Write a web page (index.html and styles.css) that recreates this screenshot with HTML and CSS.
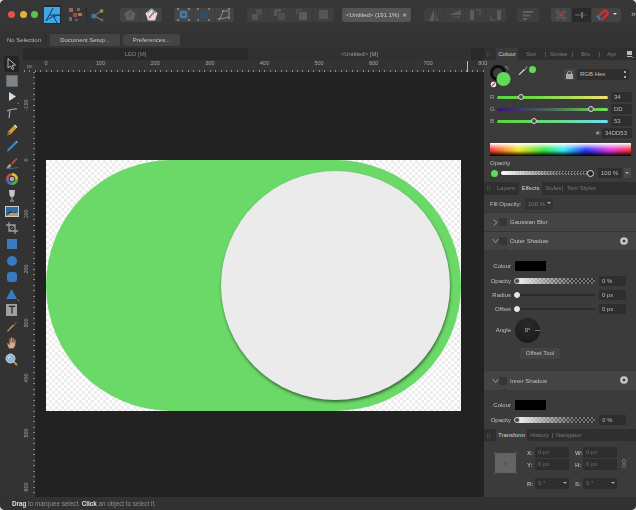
FILE: index.html
```html
<!DOCTYPE html>
<html lang="en">
<head>
<meta charset="utf-8">
<title>Affinity Designer</title>
<link rel="stylesheet" href="styles.css">
</head>
<body>
<div class="window">
  <header class="toolbar">
    <div class="lights"><i class="light red"></i><i class="light yellow"></i><i class="light green"></i></div>
    <div class="persona-active">
      <svg width="16" height="16" viewBox="0 0 16 16"><rect width="16" height="16" fill="#3fa7e6"/><path d="M2 14 9 1M5 8h11M9 8l4 8M2 14c3-3 7-5 14-6" stroke="#123a66" fill="none" stroke-width="1"/></svg>
    </div>
    <svg class="ticon" width="15" height="15" viewBox="0 0 15 15"><rect x="1" y="1" width="4" height="4" fill="#b5744a"/><rect x="9" y="1" width="3" height="3" fill="#777"/><rect x="5" y="6" width="4" height="4" fill="#b5533a"/><rect x="10" y="6" width="4" height="3" fill="#c28b3b"/><rect x="1" y="10" width="3" height="4" fill="#5a7fae"/><rect x="7" y="12" width="3" height="2" fill="#8a5aa0"/></svg>
    <i class="vline"></i>
    <svg class="ticon" width="14" height="14" viewBox="0 0 14 14"><path d="M3 8 10 3M3 8l8 4" stroke="#8aa" fill="none"/><circle cx="3" cy="8" r="2.6" fill="#4d84ad"/><circle cx="10.5" cy="3" r="2" fill="#a8a050"/><circle cx="11" cy="12" r="1.5" fill="#8a5aa0"/></svg>
    <div class="group g-styles">
      <span class="btn"><svg width="12" height="12" viewBox="0 0 12 12"><path d="M6 .5 11.5 4.5 9.5 11h-7L.5 4.5z" fill="#6c6c6c"/><path d="M6 3.5v4" stroke="#444"/></svg></span>
      <span class="btn"><svg class="bright" width="13" height="13" viewBox="0 0 13 13"><path d="M6.5.5 12.5 5 10 12.500H3L.5 5z" fill="#e6e6e6"/><path d="M4 10 9.500 3.500" stroke="#e0502f" stroke-width="1.200"/><path d="M2 5 6.500 1.500 11 5" stroke="#5a93c9" fill="none"/></svg></span>
    </div>
    <div class="group g-snap">
      <span class="btn"><svg width="13" height="13" viewBox="0 0 13 13"><rect x="2" y="2" width="9" height="9" fill="#2f5f8f"/><path d="M4 4h5v5H4z" fill="none" stroke="#7fb2df"/><path d="M0 0h2v2H0zM11 0h2v2h-2zM0 11h2v2H0zM11 11h2v2h-2z" fill="#999"/></svg></span>
      <span class="btn"><svg width="13" height="13" viewBox="0 0 13 13"><rect x="3" y="3" width="7" height="7" fill="#2d5275"/><path d="M0 0h2v2H0zM11 0h2v2h-2zM0 11h2v2H0zM11 11h2v2h-2z" fill="#888"/></svg></span>
      <span class="btn"><svg width="13" height="13" viewBox="0 0 13 13"><path d="M2 11 5 3h6v6z" fill="none" stroke="#aaa"/><path d="M0 10h2v2H0zM10 0h2v2h-2zM10 9h2v2h-2zM4 2h2v2H4z" fill="#999"/></svg></span>
    </div>
    <div class="group g-order">
      <span class="btn"><svg width="11" height="11" viewBox="0 0 11 11"><rect x="0" y="5" width="6" height="6" fill="#5e5e5e"/><rect x="4" y="0" width="6" height="6" fill="#555"/></svg></span>
      <span class="btn"><svg width="11" height="11" viewBox="0 0 11 11"><path d="M0 0h7v3H3v4H0z" fill="#5e5e5e"/><rect x="4" y="4" width="7" height="7" fill="#555"/></svg></span>
      <span class="btn"><svg width="11" height="11" viewBox="0 0 11 11"><rect x="3" y="3" width="8" height="8" fill="#666"/><path d="M0 0h6v2H2v4H0z" fill="#555"/></svg></span>
      <span class="btn"><svg width="11" height="11" viewBox="0 0 11 11"><rect x="1" y="1" width="9" height="9" fill="#5e5e5e"/></svg></span>
    </div>
    <div class="doc-title"><span>&lt;Untitled&gt; (191.1%)</span><span class="star">★</span></div>
    <div class="group g-flip">
      <span class="btn"><svg width="12" height="12" viewBox="0 0 12 12"><path d="M6 0v12H1z" fill="#666"/><path d="M7 2v10h4z" fill="#555"/></svg></span>
      <span class="btn"><svg width="12" height="12" viewBox="0 0 12 12"><path d="M12 1v5H0z" fill="#666"/><path d="M11 7v3L3 7z" fill="#555"/></svg></span>
      <span class="btn"><svg width="12" height="12" viewBox="0 0 12 12"><path d="M1 1h4v10H1z" fill="#666"/><path d="M7 1h4v5" fill="none" stroke="#666"/></svg></span>
      <span class="btn"><svg width="12" height="12" viewBox="0 0 12 12"><path d="M7 1h4v10H7z" fill="#666"/><path d="M5 11H1V6" fill="none" stroke="#666"/></svg></span>
    </div>
    <div class="group g-align">
      <span class="btn"><svg width="12" height="10" viewBox="0 0 12 10"><path d="M1 1h10v2H1zM1 4.500h7v2H1zM1 8h4v2H1z" fill="#6c6c6c"/></svg></span>
    </div>
    <div class="group g-snapping">
      <span class="btn"><svg width="12" height="12" viewBox="0 0 12 12"><path d="M3 0v12M9 0v12M0 3h12M0 9h12" stroke="#777" stroke-width=".7"/><rect x="3" y="3" width="6" height="6" fill="#6b4d4d"/><circle cx="6" cy="6" r="1.500" fill="#e0392b"/></svg></span>
      <span class="btn dark"><svg width="12" height="8" viewBox="0 0 12 8"><path d="M0 4h6" stroke="#888"/><rect x="6" y="1" width="2" height="6" fill="#888"/><path d="M8 4h4" stroke="#666"/></svg></span>
      <span class="btn wide"><svg class="bright" width="13" height="13" viewBox="0 0 13 13"><path d="M2 9 7.500 3.200a2.500 2.500 0 0 1 3.500 3.500L5.500 12" fill="none" stroke="#d92b2b" stroke-width="2.400"/><path d="M1 8l3.500 3.500" stroke="#3f7fd6" stroke-width="1.800"/></svg><i class="caret"></i></span>
    </div>
    <span class="more">»</span>
  </header>

  <div class="context">
    <span class="ctx-label">No Selection</span>
    <i class="vline ctx-line"></i>
    <span class="ctx-btn doc-setup">Document Setup...</span>
    <span class="ctx-btn prefs">Preferences...</span>
  </div>

  <div class="main">
    <div class="workspace">
      <nav class="tools">
        <span class="tool on"><svg width="11" height="12" viewBox="0 0 11 12"><path d="M2 .5v9.500l2.500-2 1.700 3.500 1.600-.8L6.200 7.400 9.500 7z" fill="none" stroke="#ccc"/></svg></span>
        <span class="tool"><svg width="12" height="12" viewBox="0 0 12 12"><rect x=".5" y=".5" width="11" height="11" fill="#8b8b8b" stroke="#5d7f9e" stroke-dasharray="2 1"/></svg></span>
        <span class="tool sub"><svg width="8" height="9" viewBox="0 0 8 9"><path d="M1 0v9l7-4.500z" fill="#eee"/></svg></span>
        <span class="tool"><svg width="12" height="12" viewBox="0 0 12 12"><path d="M1 4c4-2 7-2 10-2M4 4l-1 7" stroke="#ccc" fill="none"/><rect x="2.500" y="2.500" width="2" height="2" fill="#5a93c9"/></svg></span>
        <span class="tool"><svg width="12" height="12" viewBox="0 0 12 12"><path d="M8.500 1 11 3.500 5 10l-4 1.500L2.500 7z" fill="#e8a23a"/><path d="M1 11.500 4 8" stroke="#5b3a12"/><path d="M8.500 1 11 3.500" stroke="#eee" stroke-width="1.500"/></svg></span>
        <span class="tool"><svg width="12" height="12" viewBox="0 0 12 12"><path d="M10 1 11.500 2.500 3.500 10.500 1 11.500 1.800 9z" fill="#3f8fd8"/><path d="M10 1 11.500 2.500" stroke="#ddd"/></svg></span>
        <span class="tool"><svg width="12" height="12" viewBox="0 0 12 12"><path d="M10.500 1 11.500 2 6.500 7.500 5 6z" fill="#c9504a"/><path d="M0 11c2-.5 1-3 4-4l1.500 1.500C5 11 2 11.500 0 11z" fill="#d9a05a"/><path d="M0 11.500c4 .5 8-.5 12-1" stroke="#3f6fa8" fill="none"/></svg></span>
        <span class="tool"><svg width="12" height="12" viewBox="0 0 13 13"><circle cx="6.500" cy="6.500" r="5" fill="none" stroke="#e04a4a" stroke-width="3"/><path d="M6.500 1.500a5 5 0 0 1 5 5" fill="none" stroke="#e8d23a" stroke-width="3"/><path d="M11.500 6.500a5 5 0 0 1-5 5" fill="none" stroke="#46c05a" stroke-width="3"/><path d="M6.500 11.500a5 5 0 0 1-5-5" fill="none" stroke="#4a6fe0" stroke-width="3"/><circle cx="6.500" cy="6.500" r="2.500" fill="#bbb"/></svg></span>
        <span class="tool"><svg width="8" height="13" viewBox="0 0 8 13"><path d="M1 1h6l-.5 4.500a2.500 2.500 0 0 1-5 0z" fill="#d5d5e0"/><path d="M4 8v3M2 12h4" stroke="#ccc"/></svg></span>
        <span class="tool"><svg width="14" height="11" viewBox="0 0 14 11"><rect width="14" height="11" fill="#ddd"/><rect x="1" y="1" width="12" height="9" fill="#2f6fb5"/><path d="M1 10 5 5l3 3 2-2 3 4z" fill="#1c2d4a"/><path d="M1 10 5 7h8v3z" fill="#d8a040"/></svg></span>
        <span class="tool"><svg width="12" height="12" viewBox="0 0 12 12"><path d="M3 0v9h9M0 3h9v9" fill="none" stroke="#aaa" stroke-width="1.300"/><path d="M3 9 9 3" stroke="#aaa" stroke-width=".7"/></svg></span>
        <span class="tool"><i class="shape square"></i></span>
        <span class="tool"><i class="shape circle"></i></span>
        <span class="tool"><i class="shape rounded"></i></span>
        <span class="tool sub"><svg width="11" height="10" viewBox="0 0 11 10"><path d="M5.500 0 11 10H0z" fill="#3b82d0"/></svg></span>
        <span class="tool text-tool"><svg width="8" height="10" viewBox="0 0 10 11"><path d="M1 1h8M5 1v9" stroke="#1c1c1c" stroke-width="1.600" fill="none"/></svg></span>
        <span class="tool"><svg width="12" height="12" viewBox="0 0 12 12"><path d="M1 11 7 4.500l1 1L2 11.500z" fill="#d8a877"/><path d="M7.500 5 10 1.500l1 1L8.500 6z" fill="#7a5a3a"/></svg></span>
        <span class="tool"><svg width="12" height="13" viewBox="0 0 12 13"><path d="M3 12.500 1 7.500l1-.5 1.500 2V2.500l1 0 .5 4V1.500h1.200l.3 5V2h1.200l.1 5 .9-3.500 1 .3-.5 5.700-1.700 3z" fill="#e9b89a" stroke="#7a4a30" stroke-width=".4"/></svg></span>
        <span class="tool"><svg width="13" height="13" viewBox="0 0 13 13"><path d="M8 8l4 4" stroke="#d9a040" stroke-width="1.800"/><circle cx="5.500" cy="5.500" r="4.500" fill="#8fc6f5" stroke="#ddd"/><path d="M3.500 5.500a2 2 0 0 1 2-2" stroke="#fff" fill="none"/></svg></span>
      </nav>
      <div class="stage">
        <div class="doc-tabs">
          <span class="doc-tab led">LED [M]</span>
          <span class="doc-tab current">&lt;Untitled&gt; [M]</span>
          <span class="doc-tab rest"></span>
        </div>
        <div class="hruler">
          <span class="corner">px</span>
          <div class="hmarks">
            <span class="mark"><b>0</b></span><span class="mark"><b>100</b></span><span class="mark"><b>200</b></span><span class="mark"><b>300</b></span><span class="mark"><b>400</b></span><span class="mark"><b>500</b></span><span class="mark"><b>600</b></span><span class="mark"><b>700</b></span><span class="mark"><b>800</b></span>
          </div>
          <i class="cursor-tick"></i>
        </div>
        <div class="stage-body">
          <div class="vruler">
            <span class="vmark"><b>-100</b></span><span class="vmark"><b>0</b></span><span class="vmark"><b>100</b></span><span class="vmark"><b>200</b></span><span class="vmark"><b>300</b></span><span class="vmark"><b>400</b></span><span class="vmark"><b>500</b></span><span class="vmark"><b>600</b></span>
          </div>
          <main class="canvas">
            <div class="artboard">
              <div class="pill"></div>
              <div class="knob"></div>
            </div>
          </main>
        </div>
      </div>
    </div>

    <aside class="panel">
      <div class="tabs">
        <i class="grip"></i>
        <span class="tab active t-colour">Colour</span>
        <span class="tab t-swt">Swt</span><i class="sep"></i>
        <span class="tab t-stroke">Stroke</span><i class="sep"></i>
        <span class="tab t-brs">Brs</span><i class="sep"></i>
        <span class="tab t-apr">Apr</span>
        <svg class="tab-menu" width="7" height="7" viewBox="0 0 7 7"><rect width="5" height="4" fill="#bbb"/><path d="M0 5h5v1H0z" fill="#bbb"/><path d="M5 6h2L6 7z" fill="#bbb"/></svg>
      </div>
      <section class="colour">
        <div class="colour-head">
          <svg class="selector" width="24" height="25" viewBox="0 0 24 25"><circle cx="9" cy="9" r="6.500" fill="none" stroke="#0c0c0c" stroke-width="3"/><path d="M16 2.500c2 0 3 1.500 3 3" fill="none" stroke="#999"/><circle cx="14.500" cy="15" r="7" fill="#5fdc56"/><circle cx="4.500" cy="20.500" r="2.700" fill="#eee"/><path d="M3 22 6 19" stroke="#d93a2b" stroke-width="1.200"/></svg>
          <svg class="dropper" width="10" height="10" viewBox="0 0 10 10"><path d="M.5 9.500 6 4l1 1L1.500 10z" fill="#ddd"/><path d="M6.500 4.500 9 1l.7.700-2.500 3.500z" fill="#b9853a"/></svg>
          <i class="dot"></i>
          <span class="lock"><svg width="7" height="8" viewBox="0 0 7 8"><rect y="3" width="7" height="5" fill="#aaa"/><path d="M1.500 3V2a2 2 0 0 1 4 0v1" fill="none" stroke="#aaa"/></svg></span>
          <span class="select">RGB Hex<span class="updown"></span></span>
        </div>
        <div class="srow"><label>R</label><div class="track t-r"><i class="thumb" style="left:22%"></i></div><span class="field">34</span></div>
        <div class="srow"><label>G</label><div class="track t-g"><i class="thumb" style="left:85%"></i></div><span class="field">DD</span></div>
        <div class="srow"><label>B</label><div class="track t-b"><i class="thumb" style="left:33%"></i></div><span class="field">53</span></div>
        <div class="hexrow"><label>#:</label><span class="field hex">34DD53</span></div>
        <div class="spectrum"></div>
        <div class="op-label">Opacity</div>
        <div class="oprow"><i class="dot"></i><div class="track t-op"><i class="thumb hollow" style="left:100%"></i></div><span class="field pct">100 %</span><span class="field arrow"><i class="caret"></i></span></div>
      </section>

      <div class="tabs tabs-fx">
        <i class="grip"></i>
        <span class="tab t-layers">Layers</span>
        <span class="tab active t-effects">Effects</span>
        <span class="tab t-styles">Styles</span><i class="sep"></i>
        <span class="tab t-text">Text Styles</span>
      </div>
      <div class="fill-row"><label>Fill Opacity:</label><span class="field fill">100 %<i class="caret"></i></span></div>
      <div class="fx-row"><svg width="6" height="7" viewBox="0 0 6 7"><path d="M1 .5 4.500 3.500 1 6.500" fill="none" stroke="#999"/></svg><i class="check"></i><span>Gaussian Blur</span></div>
      <div class="fx-row open"><svg width="7" height="6" viewBox="0 0 7 6"><path d="M.5 1 3.500 4.500 6.500 1" fill="none" stroke="#999"/></svg><i class="check"></i><span>Outer Shadow</span><svg class="gear" width="8" height="8" viewBox="0 0 8 8"><circle cx="4" cy="4" r="2.600" fill="none" stroke="#ccc" stroke-width="2"/><circle cx="4" cy="4" r="3.800" fill="none" stroke="#ccc" stroke-dasharray="1.200 1.200"/></svg></div>
      <section class="fx-body outer">
        <div class="frow f-colour"><label>Colour</label><i class="swatch"></i></div>
        <div class="frow"><label>Opacity</label><div class="ftrack checker"><i class="thumb" style="left:0"></i></div><span class="field ff">0 %</span></div>
        <div class="frow"><label>Radius</label><div class="ftrack"><i class="thumb solid" style="left:0"></i></div><span class="field ff">0 px</span></div>
        <div class="frow"><label>Offset</label><div class="ftrack"><i class="thumb solid" style="left:0"></i></div><span class="field ff">0 px</span></div>
        <div class="frow f-angle"><label>Angle</label><div class="dial"><span>0°</span><i></i></div></div>
        <div class="offset-wrap"><span class="offset-btn">Offset Tool</span></div>
      </section>
      <div class="fx-row open inner-row"><svg width="7" height="6" viewBox="0 0 7 6"><path d="M.5 1 3.500 4.500 6.500 1" fill="none" stroke="#999"/></svg><i class="check"></i><span>Inner Shadow</span><svg class="gear" width="8" height="8" viewBox="0 0 8 8"><circle cx="4" cy="4" r="2.600" fill="none" stroke="#ccc" stroke-width="2"/><circle cx="4" cy="4" r="3.800" fill="none" stroke="#ccc" stroke-dasharray="1.200 1.200"/></svg></div>
      <section class="fx-body inner">
        <div class="frow f-colour"><label>Colour</label><i class="swatch"></i></div>
        <div class="frow"><label>Opacity</label><div class="ftrack checker"><i class="thumb" style="left:0"></i></div><span class="field ff">0 %</span></div>
      </section>

      <div class="tabs tabs-tf">
        <i class="grip"></i>
        <span class="tab active t-transform">Transform</span>
        <span class="tab t-history">History</span><i class="sep"></i>
        <span class="tab t-nav">Navigator</span>
      </div>
      <section class="transform">
        <div class="anchor"><i class="a1"></i><i class="a2"></i><i class="a3"></i><i class="a4"></i><i class="a5"></i></div>
        <div class="tgrid">
          <label>X:</label><span class="field tf">0 px</span><label>W:</label><span class="field tf">0 px</span>
          <label>Y:</label><span class="field tf">0 px</span><label>H:</label><span class="field tf">0 px</span>
          <label class="low">R:</label><span class="field tf low">0 °<i class="caret"></i></span><label class="low">S:</label><span class="field tf low">0 °<i class="caret"></i></span>
        </div>
        <svg class="link" width="4" height="9" viewBox="0 0 4 9"><path d="M2 0a1.500 2 0 0 1 1.500 2v1a1.500 1.500 0 0 1-3 0V2A1.500 2 0 0 1 2 0zM2 5a1.500 1.500 0 0 1 1.500 1.500v1a1.500 1.500 0 0 1-3 0v-1A1.500 1.500 0 0 1 2 5z" fill="none" stroke="#888" stroke-width=".7"/></svg>
      </section>
    </aside>
  </div>

  <footer class="status"><b>Drag</b> to marquee select. <b>Click</b> an object to select it.</footer>
</div>
</body>
</html>
```
FILE: styles.css
```css
* { box-sizing: border-box; }
html, body { margin: 0; height: 100%; background: #d8d8d8; }
body { font: 6px/1 "Liberation Sans", Arial, sans-serif; color: #c4c4c4; overflow: hidden; }
i { display: block; font-style: normal; }
svg { display: block; flex: none; }
label { display: block; }

.window { width: 636px; height: 510px; background: #333; border-radius: 5px; overflow: hidden; display: flex; flex-direction: column; filter: blur(.45px); }

/* top toolbar */
.toolbar { height: 31px; flex: none; display: flex; align-items: center; padding: 0 0 2px 8px; background: #363636; }
.lights { display: flex; gap: 4.500px; }
.light { width: 7px; height: 7px; border-radius: 50%; }
.light.red { background: #e4524c; }
.light.yellow { background: #e2b33c; }
.light.green { background: #5bc04f; }
.persona-active { margin-left: 6px; width: 19px; height: 19px; background: #1f2a33; display: flex; align-items: center; justify-content: center; }
.ticon { margin-left: 7px; opacity: .8; }
.vline { width: 1px; height: 14px; background: #2a2a2a; margin-left: 3px; flex: none; }
.vline + .ticon { margin-left: 4px; }
.group { display: flex; height: 14px; background: #444; border-radius: 2px; flex: none; }
.group svg { opacity: .72; }
.group svg.bright { opacity: .95; }
.btn { width: 20px; display: flex; align-items: center; justify-content: center; border-left: 1px solid #3b3b3b; position: relative; }
.btn:first-child { border-left: 0; }
.btn.dark { background: #2a2a2a; }
.btn.wide { width: 30px; justify-content: flex-start; padding-left: 4px; }
.btn.wide .caret { position: absolute; right: 4px; top: 5px; border-top-color: #ddd; }
.g-styles { margin-left: 15px; width: 42px; }
.g-styles .btn { flex: 1; }
.g-snap { margin-left: 12px; width: 60px; }
.g-snap .btn, .g-order .btn, .g-flip .btn { flex: 1; }
.g-order { margin-left: 13px; width: 87px; background: #3f3f3f; }
.doc-title { margin-left: 8px; width: 69px; height: 14px; background: #555; border-radius: 2px; display: flex; align-items: center; justify-content: space-between; padding: 0 4px; color: #d0d0d0; flex: none; white-space: nowrap; }
.star { color: #aaa; }
.g-flip { margin-left: 13px; width: 82px; background: #3f3f3f; }
.g-align { margin-left: 11px; width: 22px; background: #3f3f3f; }
.g-align .btn { width: 22px; }
.g-snapping { margin-left: 12px; width: 70px; }
.more { margin-left: 10px; font-size: 9px; color: #bbb; }

/* context bar */
.context { height: 17px; flex: none; display: flex; align-items: flex-start; padding: 3px 0 0 7px; background: #333; }
.ctx-label { line-height: 12px; width: 36px; color: #b8b8b8; white-space: nowrap; }
.ctx-line { height: 12px; margin-left: 2px; }
.ctx-btn { height: 12px; line-height: 12px; background: #444; border-radius: 2px; text-align: center; color: #c8c8c8; }
.doc-setup { margin-left: 4px; width: 70px; }
.prefs { margin-left: 3px; width: 57px; }

/* main */
.main { flex: 1; min-height: 0; display: flex; }
.workspace { width: 484px; display: flex; flex: none; }
.tools { width: 23px; flex: none; display: flex; flex-direction: column; align-items: center; padding-top: 8px; background: #333; }
.tool { width: 15px; height: 16.400px; flex: none; display: flex; align-items: center; justify-content: center; position: relative; }
.tool svg, .tool .shape { opacity: .9; }
.tool.on { background: #242424; border-radius: 2px; }
.tool.sub::after { content: ""; position: absolute; right: 0; bottom: 1px; border: 1.500px solid transparent; border-right-color: #777; border-bottom-color: #777; }
.text-tool::before { content: ""; position: absolute; left: 2px; top: 2px; right: 2px; bottom: 2px; background: #a0a0a0; }
.text-tool svg { position: relative; }
.shape { width: 10px; height: 10px; background: #3b82d0; }
.shape.circle { border-radius: 50%; }
.shape.rounded { border-radius: 3px; }

.stage { flex: 1; min-width: 0; display: flex; flex-direction: column; }
.doc-tabs { height: 12px; flex: none; display: flex; }
.doc-tab { line-height: 12px; text-align: center; color: #858585; }
.led { width: 225px; background: #292929; }
.current { width: 223px; background: #313131; color: #9a9a9a; }
.rest { flex: 1; background: #292929; }

.hruler { height: 12px; flex: none; position: relative; display: flex; background-color: #333;
  background-image: repeating-linear-gradient(90deg, #8a8a8a 0, #8a8a8a 1px, transparent 1px, transparent 5.460px);
  background-size: 100% 2px; background-repeat: no-repeat; background-position: 1px 100%; }
.corner { width: 23px; flex: none; padding: 4px 0 0 4px; font-size: 5px; color: #999; }
.hmarks { display: flex; }
.mark { width: 54.600px; flex: none; padding-top: 1px; font-size: 5.500px; color: #a8a8a8; }
.mark b { display: inline-block; font-weight: 400; transform: translateX(-50%); }
.cursor-tick { position: absolute; left: 444px; top: 1px; bottom: 0; width: 1px; background: #bbb; }

.stage-body { flex: 1; min-height: 0; display: flex; }
.vruler { width: 12px; flex: none; display: flex; flex-direction: column; padding-top: 33px; overflow: hidden; background-color: #333;
  background-image: repeating-linear-gradient(180deg, #8a8a8a 0, #8a8a8a 1px, transparent 1px, transparent 5.460px);
  background-size: 2px 100%; background-repeat: no-repeat; background-position: 100% 0; }
.vmark { height: 54.600px; flex: none; font-size: 5.500px; color: #a8a8a8; padding-left: 1px; }
.vmark b { display: block; width: 7px; height: max-content; font-weight: 400; writing-mode: vertical-rl; transform: rotate(180deg) translateY(50%); }

.canvas { flex: 1; position: relative; background: #222; overflow: hidden; }
.artboard { position: absolute; left: 11px; top: 88px; width: 415px; height: 251px;
  background-color: #fff; background-image: repeating-conic-gradient(#ececec 0 25%, #fff 0 50%); background-size: 6px 6px; }
.pill { width: 100%; height: 100%; border-radius: 125.500px; background: #6bd968; }
.knob { position: absolute; left: 175px; top: 11px; width: 229px; height: 229px; border-radius: 50%; background: #ebebeb; box-shadow: .5px 2px 3px rgba(0,0,0,.5); }

/* right panel */
.panel { flex: 1; min-width: 0; display: flex; flex-direction: column; background: #3b3b3b; color: #c0c0c0; }
.tabs { height: 12px; flex: none; display: flex; align-items: stretch; background: #2f2f2f; position: relative; }
.grip { width: 3px; height: 5px; margin: 4px 0 0 3px; border-left: 1px solid #444; border-right: 1px solid #444; flex: none; }
.tab { line-height: 12px; color: #777; white-space: nowrap; flex: none; }
.tab.active { background: #3b3b3b; color: #d4d4d4; text-align: center; }
.sep { width: 1px; height: 5px; margin-top: 4px; background: #555; flex: none; }
.t-colour { margin-left: 6px; width: 22px; }
.t-swt { margin-left: 8px; width: 19px; }
.t-stroke { margin-left: 4px; width: 22px; }
.t-brs { margin-left: 8px; width: 18px; }
.t-apr { margin-left: 7px; width: 18px; }
.tab-menu { position: absolute; right: 2px; top: 3px; }

.colour { height: 122px; flex: none; padding: 3px 4px 0 6px; }
.colour-head { height: 25px; display: flex; align-items: flex-start; }
.selector { margin: 1px 0 -1px -1px; }
.dropper { margin: 2px 0 0 5px; }
.dot { width: 7px; height: 7px; border-radius: 50%; background: #5fdc56; flex: none; }
.colour-head .dot { margin: 3px 0 0 1px; }
.lock { margin: 6px 0 0 28px; width: 11px; height: 11px; background: #454545; display: flex; align-items: center; justify-content: center; flex: none; }
.select { margin: 6px 0 0 2px; width: 52px; height: 11px; line-height: 11px; background: #2e2e2e; padding-left: 3px; position: relative; flex: none; }
.updown { position: absolute; right: 3px; top: 2px; width: 2px; height: 7px; border-top: 2px solid #aaa; border-bottom: 2px solid #aaa; }

.srow { height: 12px; display: flex; align-items: center; }
.srow label { width: 7px; flex: none; color: #aaa; }
.colour-head + .srow { margin-top: 3px; }
.track { height: 3px; border-radius: 2px; position: relative; flex: none; width: 111px; }
.t-r { background: linear-gradient(90deg, #58d340, #77d94a 40%, #f2e36e); }
.t-g { background: linear-gradient(90deg, #33156e, #4d6a5c 50%, #6fe35a); }
.t-b { background: linear-gradient(90deg, #57d633, #6bd98a 55%, #72dcff); }
.thumb { position: absolute; top: 50%; width: 6px; height: 6px; margin: -3px 0 0 -3px; border-radius: 50%; border: 1px solid #d8d8d8; background: #4e4e4e; }
.thumb.hollow { width: 7px; height: 7px; margin: -3.500px 0 0 -3.500px; background: #222; }
.thumb.solid { background: #e8e8e8; border-color: #e8e8e8; }
.field { height: 10px; line-height: 10px; background: #2e2e2e; padding-left: 3px; flex: none; color: #bcbcbc; position: relative; display: block; }
.srow .field { width: 21px; margin-left: 3px; }
.hexrow { height: 12px; margin-top: 0; display: flex; align-items: center; justify-content: flex-end; gap: 1px; }
.field.hex { width: 30px; }
.spectrum { height: 13px; margin-top: 4px; width: 141px;
  background: linear-gradient(180deg, #fff 0, rgba(255,255,255,.15) 45%, rgba(0,0,0,0) 60%, #000 100%),
  linear-gradient(90deg, #f03030, #f4e020 20%, #30e030 38%, #30e8f0 52%, #2030f0 68%, #e030e0 85%, #f03030); }
.op-label { margin-top: 3px; height: 8px; line-height: 8px; }
.oprow { height: 12px; margin-top: 0; display: flex; align-items: center; }
.oprow .dot { margin-left: 1px; }
.track.t-op { width: 89px; height: 4px; margin-left: 3px; background-color: #333;
  background-image: linear-gradient(90deg, #fff, rgba(255,255,255,0) 70%), repeating-conic-gradient(#777 0 25%, #2c2c2c 0 50%); background-size: 100% 100%, 3px 3px; }
.field.pct { width: 24px; margin-left: 8px; }
.field.arrow { width: 7px; margin-left: 2px; padding: 0; background: #484848; }
.caret { width: 0; height: 0; border: 2px solid transparent; border-top: 2.500px solid #aaa; border-bottom: 0; }
.field > .caret { position: absolute; right: 2px; top: 4px; }

.tabs-fx { height: 13px; }
.tabs-fx .tab { line-height: 13px; }
.t-layers { margin-left: 7px; width: 22px; }
.t-effects { width: 23px; }
.t-styles { margin-left: 3px; width: 17px; }
.t-text { margin-left: 4px; }

.fill-row { height: 17px; flex: none; display: flex; align-items: center; padding-left: 6px; background: #3b3b3b; }
.fill-row label { width: 35px; flex: none; }
.field.fill { width: 28px; height: 12px; line-height: 12px; background: #333; color: #777; }
.fx-row { height: 19px; flex: none; display: flex; align-items: center; padding-left: 8px; background: #444; border-top: 1px solid #363636; position: relative; }
.fx-row svg:first-child { width: 7px; }
.check { width: 8px; height: 8px; background: #363636; margin: 0 3px 0 0; flex: none; }
.fx-row .gear { position: absolute; right: 8px; top: 5px; }
.fx-row.open::after { content: ""; position: absolute; left: 19px; bottom: 0; border: 2px solid transparent; border-bottom-color: #3b3b3b; border-top: 0; }
.inner-row { height: 20px; }

.fx-body { flex: none; padding-top: 10px; }
.fx-body.outer { height: 120px; }
.fx-body.inner { height: 39px; padding-top: 9px; }
.frow { height: 14px; display: flex; align-items: center; }
.frow label { width: 27px; flex: none; text-align: right; }
.f-colour { height: 11px; margin-bottom: 3px; }
.swatch { width: 31px; height: 10px; background: #000; margin-left: 4px; flex: none; }
.ftrack { width: 78px; height: 2px; margin-left: 6px; background: #2c2c2c; border-radius: 1px; position: relative; flex: none; }
.ftrack.checker { height: 6px; border-radius: 3px; background-color: #2c2c2c;
  background-image: linear-gradient(90deg, #f2f2f2, rgba(255,255,255,0) 75%), repeating-conic-gradient(#777 0 25%, #2c2c2c 0 50%); background-size: 100% 100%, 4px 4px; }
.ftrack.checker .thumb { background: #444; border-color: #ccc; }
.field.ff { width: 27px; margin-left: 4px; }
.f-angle { height: 26px; margin-top: 1px; }
.dial { width: 25px; height: 25px; margin-left: 4px; border-radius: 50%; background: radial-gradient(circle at 50% 30%, #2a2a2a, #1d1d1d 70%); position: relative; display: flex; align-items: center; justify-content: center; }
.dial i { position: absolute; right: 0; top: 50%; width: 5px; height: 1px; background: #5f7f9f; }
.offset-wrap { margin-top: 5px; display: flex; padding-left: 36px; }
.offset-btn { width: 40px; height: 11px; line-height: 11px; background: #444; border-radius: 2px; text-align: center; }

.t-transform { margin-left: 6px; width: 31px; }
.t-history { margin-left: 3px; width: 22px; }
.t-nav { margin-left: 3px; }
.transform { flex: 1; position: relative; padding: 6px 0 0 11px; display: flex; align-items: flex-start; }
.anchor { width: 21px; height: 20px; margin-top: 6px; background: #646464; position: relative; flex: none; }
.anchor i { position: absolute; width: 3px; height: 3px; background: #555; border-radius: 1px; }
.a1 { left: -1px; top: -1px; } .a2 { right: -1px; top: -1px; } .a3 { left: -1px; bottom: -1px; } .a4 { right: -1px; bottom: -1px; } .a5 { left: 9px; top: 9px; }
.tgrid { margin-left: 11px; display: grid; grid-template-columns: 8px 34px 14px 34px; grid-auto-rows: 11px; row-gap: 1px; align-items: center; }
.tgrid label { text-align: left; font-weight: 700; color: #aaa; }
.field.tf { width: 34px; color: #707070; height: 11px; line-height: 11px; }
.tgrid label:nth-of-type(even) { padding-left: 6px; }
.tgrid .low { margin-top: 14px; }
.link { margin: 12px 0 0 5px; }

/* status */
.status { height: 13px; flex: none; line-height: 13px; padding-left: 12px; font-size: 6.300px; background: #323232; color: #8e8e8e; }
.status b { color: #e0e0e0; }
```
